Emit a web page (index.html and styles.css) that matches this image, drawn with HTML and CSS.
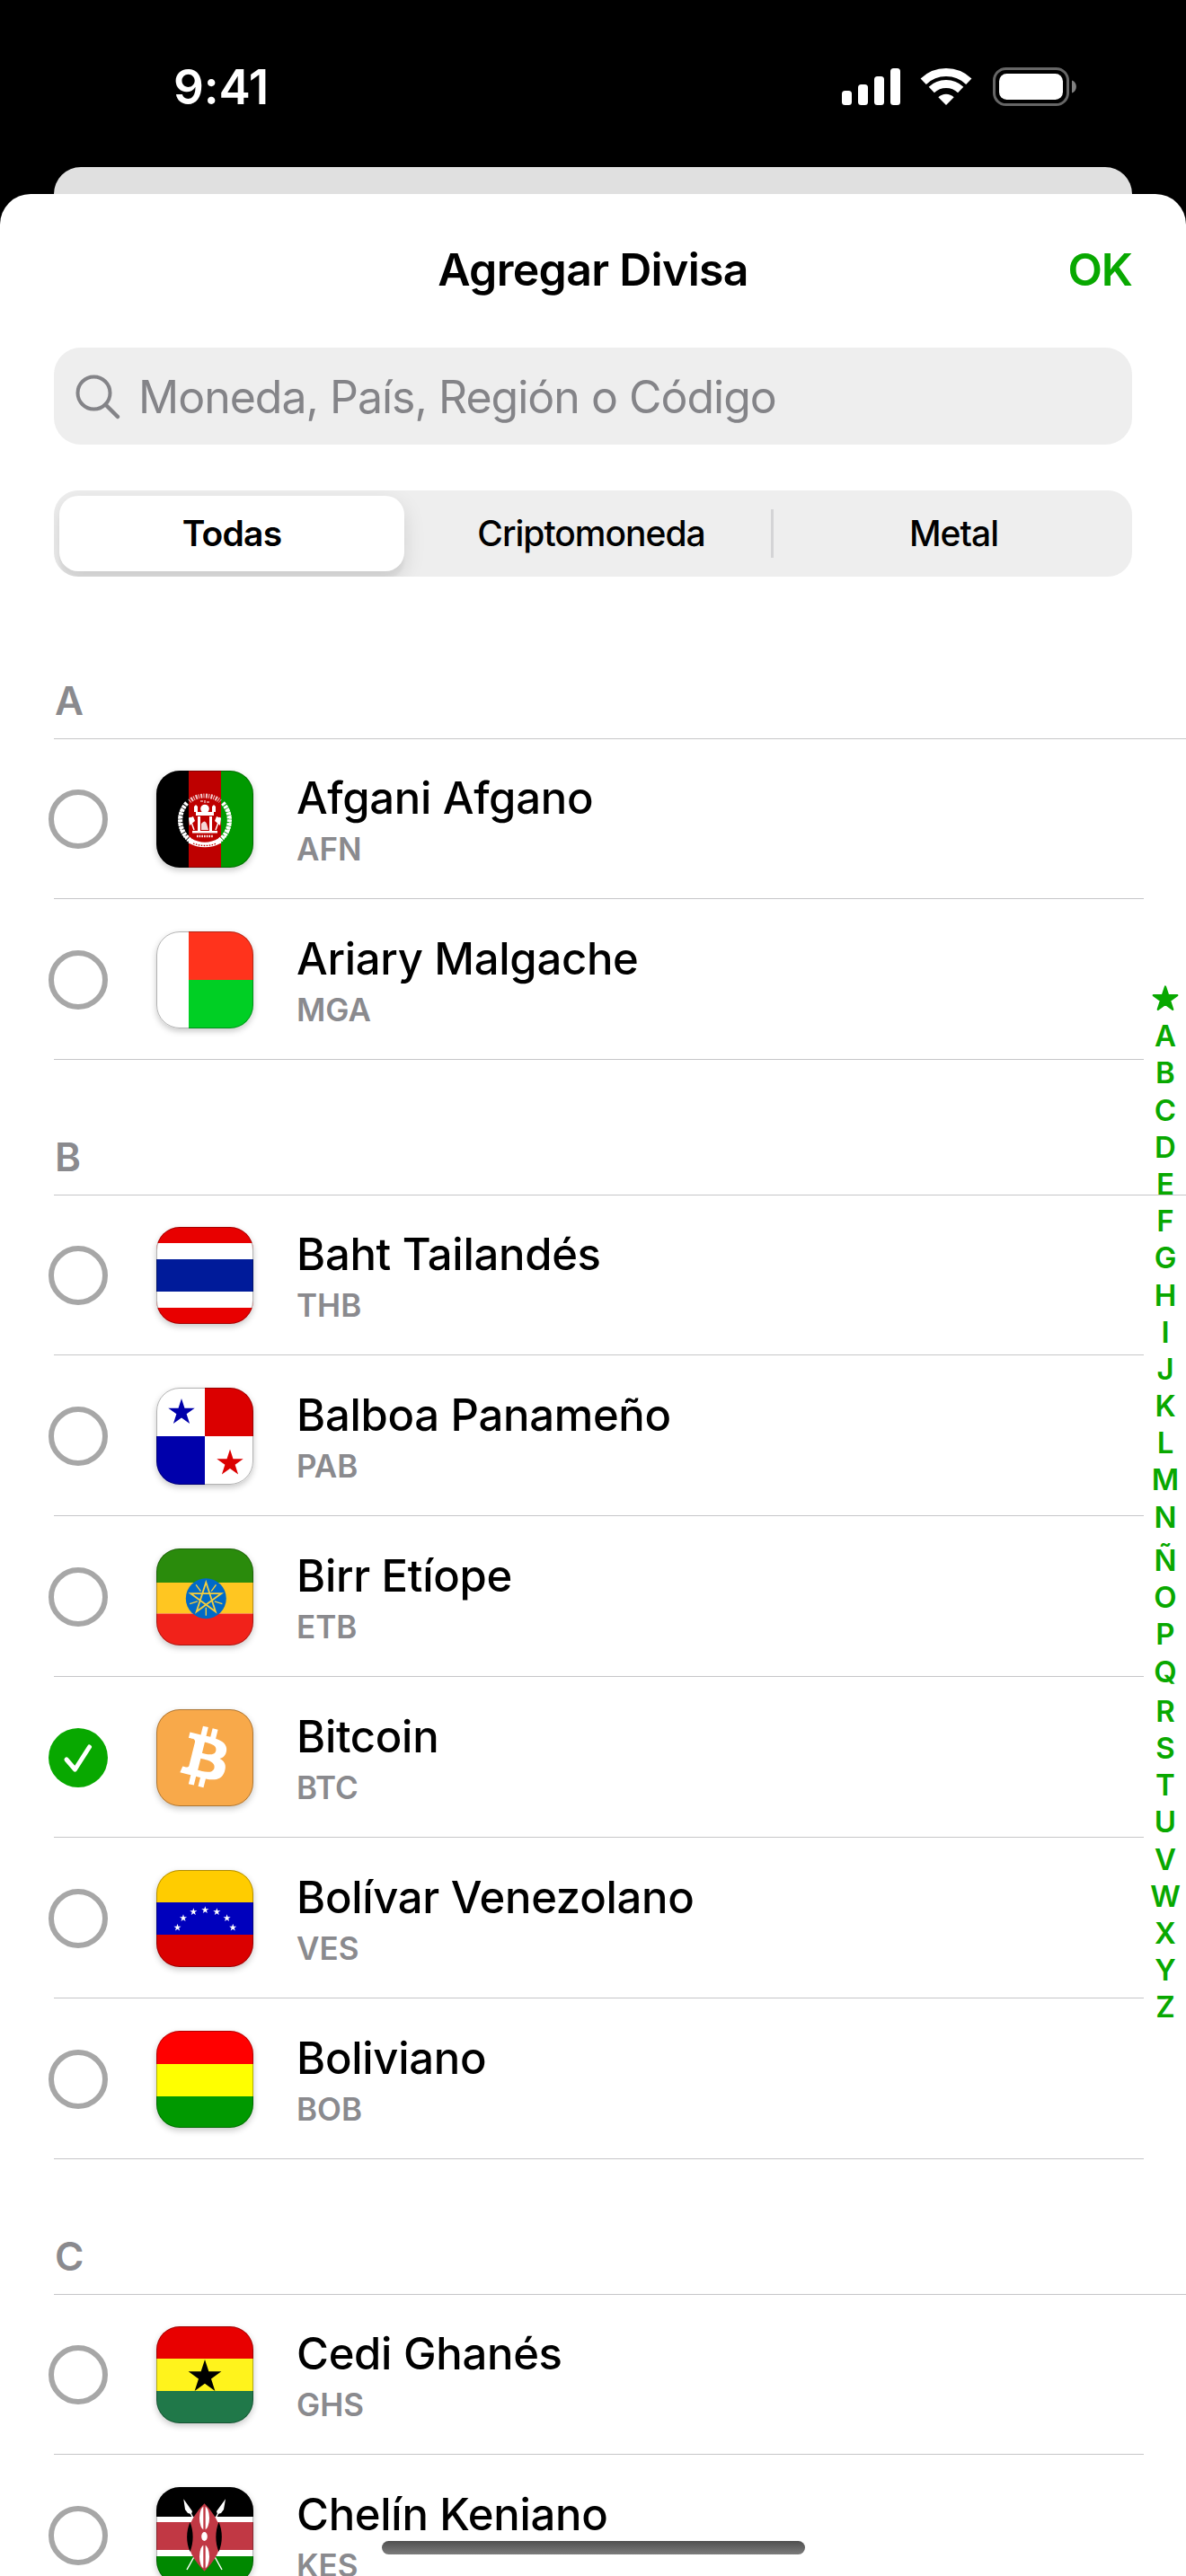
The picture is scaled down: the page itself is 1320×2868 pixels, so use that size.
FILE: index.html
```html
<!DOCTYPE html>
<html lang="es">

<head>
    <meta charset="UTF-8">
    <title>Agregar Divisa</title>
    <link rel="stylesheet" href="styles.css">
</head>

<body>

    <!-- Formas compartidas -->
    <svg class="defs" width="0" height="0">
        <defs>
            <polygon id="star" points="0,-1 .2245,-.309 .951,-.309 .363,.118 .588,.809 0,.382 -.588,.809 -.363,.118 -.951,-.309 -.2245,-.309" />
        </defs>
    </svg>

    <header class="status-bar">
        <span class="time">9:41</span>
        <div class="status-icons">
            <svg width="66" height="42" viewBox="0 0 66 42" fill="#fff">
                <rect x="0" y="25" width="11" height="16" rx="3.5" />
                <rect x="18" y="18" width="11" height="23" rx="3.5" />
                <rect x="36" y="9" width="11" height="32" rx="3.5" />
                <rect x="54" y="0" width="11" height="41" rx="3.5" />
            </svg>
            <svg class="wifi" width="58" height="43" viewBox="0 0 58 43" fill="none" stroke="#fff" stroke-width="9">
                <path d="M3.7 15.7a36.5 36.5 0 0 1 50.6 0" />
                <path d="M12.8 25a23.5 23.5 0 0 1 32.4 0" />
                <path d="M29 42L20.3 33.2a12.5 12.5 0 0 1 17.4 0z" fill="#fff" stroke="none" />
            </svg>
            <svg class="battery" width="93" height="43" viewBox="0 0 93 43">
                <rect x="1.5" y="1.5" width="82" height="40" rx="13" fill="none" stroke="#666" stroke-width="3" />
                <rect x="7" y="7" width="71" height="29" rx="8.5" fill="#fff" />
                <path d="M88 14.500c6.500 2 6.500 12 0 14z" fill="#808080" />
            </svg>
        </div>
    </header>

    <div class="back-card"></div>

    <main class="sheet">
        <div class="nav">
            <h1>Agregar Divisa</h1>
            <button class="ok">OK</button>
        </div>

        <div class="search">
            <svg width="50" height="50" viewBox="0 0 50 50" fill="none" stroke="#848488" stroke-width="4" stroke-linecap="round">
                <circle cx="20.500" cy="20.500" r="18" />
                <path d="M33.500 33.500L47 47" stroke-width="4.500" />
            </svg>
            <span>Moneda, País, Región o Código</span>
        </div>

        <div class="tabs">
            <div class="tab active">Todas</div>
            <div class="tab">Criptomoneda</div>
            <div class="tab last">Metal</div>
        </div>

        <!-- A -->
        <h2>A</h2>
        <ul>
            <li>
                <span class="check"></span>
                <div class="flag">
                    <svg viewBox="0 0 108 108">
                        <path fill="#000" d="M0 0h36v108H0z" />
                        <path fill="#be0000" d="M36 0h36v108H36z" />
                        <path fill="#090" d="M72 0h36v108H72z" />
                        <g fill="none" stroke="#fff">
                            <path d="M34 36C23 48 24 69 40 79" stroke-width="5" stroke-dasharray="3 1" />
                            <path d="M74 36C85 48 84 69 68 79" stroke-width="5" stroke-dasharray="3 1" />
                            <path d="M29 42C22 54 26 71 38 80M79 42C86 54 82 71 70 80" stroke-width="3" stroke-dasharray="1.500 1.200" />
                            <path d="M37 34C46 26 62 26 71 34" stroke-width="5" stroke-dasharray="1 1.400 2 1.200" opacity=".8" />
                            <path d="M37 78Q54 87 71 78" stroke-width="5.500" />
                            <path d="M41 81Q54 86 67 81" stroke="#be0000" stroke-width="1.300" stroke-dasharray="1.500 1.500" />
                            <path d="M49 34h3M54 33v3M56 35h3" stroke-width="1" />
                            <path d="M37 52l5 14M71 52l-5 14" stroke-width="1.500" />
                            <path d="M45 73h18" stroke-width="2.500" stroke-dasharray="1.500 1.200" />
                        </g>
                        <g fill="#fff">
                            <path d="M36 53l5-2 2 5-6 5zM72 53l-5-2-2 5 6 5z" />
                            <path d="M42 46v-6l2-2 2 2v6zM62 46v-6l2-2 2 2v6z" />
                            <circle cx="54" cy="42.500" r="4.800" />
                            <path d="M44 46h20v4H44zM46 51h3v16h-3zM59 51h3v16h-3zM40 67h28v2.500H40z" />
                            <path d="M50 66v-7q4-5 6 0l2 7z" opacity=".85" />
                        </g>
                    </svg>
                </div>
                <div class="info"><b>Afgani Afgano</b><small>AFN</small></div>
            </li>
            <li>
                <span class="check"></span>
                <div class="flag">
                    <svg viewBox="0 0 108 108">
                        <path fill="#fff" d="M0 0h36v108H0z" />
                        <path fill="#ff331c" d="M36 0h72v54H36z" />
                        <path fill="#00cf24" d="M36 54h72v54H36z" />
                    </svg>
                </div>
                <div class="info"><b>Ariary Malgache</b><small>MGA</small></div>
            </li>
        </ul>

        <!-- B -->
        <h2>B</h2>
        <ul>
            <li>
                <span class="check"></span>
                <div class="flag">
                    <svg viewBox="0 0 108 108">
                        <path fill="#e80000" d="M0 0h108v108H0z" />
                        <path fill="#fff" d="M0 18h108v72H0z" />
                        <path fill="#001b9a" d="M0 36h108v36H0z" />
                    </svg>
                </div>
                <div class="info"><b>Baht Tailandés</b><small>THB</small></div>
            </li>
            <li>
                <span class="check"></span>
                <div class="flag">
                    <svg viewBox="0 0 108 108">
                        <path fill="#fff" d="M0 0h108v108H0z" />
                        <path fill="#db0000" d="M54 0h54v54H54z" />
                        <path fill="#0000ab" d="M0 54h54v54H0z" />
                        <use href="#star" fill="#0000ab" transform="translate(28 27.500) scale(15.500)" />
                        <use href="#star" fill="#db0000" transform="translate(82 84) scale(15.500)" />
                    </svg>
                </div>
                <div class="info"><b>Balboa Panameño</b><small>PAB</small></div>
            </li>
            <li>
                <span class="check"></span>
                <div class="flag">
                    <svg viewBox="0 0 108 108">
                        <path fill="#2a8b0c" d="M0 0h108v38H0z" />
                        <path fill="#ffc621" d="M0 38h108v34.500H0z" />
                        <path fill="#f1221a" d="M0 72.500h108V108H0z" />
                        <circle cx="55.300" cy="55.700" r="22.500" fill="#006ac8" />
                        <g transform="translate(55.300 55.700)" fill="none" stroke="#f5ce3d" stroke-width="1.800">
                            <path d="M0-18L10.600 14.600-17.100-5.600H17.100L-10.600 14.600z" />
                            <path d="M0 10v9M9.500 3.100l8.600 2.800M-9.500 3.100l-8.600 2.800M5.900-8.100l5.300-7.300M-5.900-8.100l-5.300-7.300" stroke-width="1.400" />
                        </g>
                    </svg>
                </div>
                <div class="info"><b>Birr Etíope</b><small>ETB</small></div>
            </li>
            <li>
                <span class="check checked">
                    <svg width="66" height="66" viewBox="0 0 66 66" fill="none" stroke="#fff" stroke-width="5" stroke-linecap="round" stroke-linejoin="round">
                        <path d="M20 35L29.500 46 45.500 21" />
                    </svg>
                </span>
                <div class="flag">
                    <svg viewBox="0 0 108 108">
                        <path fill="#f8a94a" d="M0 0h108v108H0z" />
                        <path fill="#fff" fill-rule="evenodd" transform="translate(.1 -1) scale(4.570)" d="M17.060 10.360c.24-1.580-.97-2.430-2.610-3l.53-2.140-1.300-.33-.52 2.080c-.34-.09-.69-.17-1.040-.25l.52-2.100-1.300-.32-.53 2.140c-.28-.06-.56-.13-.83-.2l-1.800-.46-.34 1.390s.97.22.95.24c.53.13.62.48.61.76l-1.460 5.850c-.07.16-.23.4-.6.31.01.02-.95-.24-.95-.24l-.65 1.500 1.690.42c.32.08.62.16.93.24l-.54 2.160 1.300.32.53-2.140c.36.1.7.19 1.040.27l-.53 2.130 1.300.33.54-2.160c2.220.42 3.890.25 4.590-1.760.57-1.610-.03-2.550-1.190-3.150.85-.2 1.490-.76 1.660-1.920zm-2.970 4.170c-.4 1.620-3.130.74-4.010.52l.71-2.870c.89.22 3.720.66 3.300 2.350zm.4-4.190c-.37 1.470-2.640.72-3.370.54l.65-2.600c.74.18 3.110.53 2.720 2.060z" />
                    </svg>
                </div>
                <div class="info"><b>Bitcoin</b><small>BTC</small></div>
            </li>
            <li>
                <span class="check"></span>
                <div class="flag">
                    <svg viewBox="0 0 108 108">
                        <path fill="#fc0" d="M0 0h108v36H0z" />
                        <path fill="#0000bd" d="M0 36h108v36H0z" />
                        <path fill="#db0000" d="M0 72h108v36H0z" />
                        <g fill="#fff">
                            <use href="#star" transform="translate(23.500 64) scale(4.300)" />
                            <use href="#star" transform="translate(30 53.500) scale(4.300)" />
                            <use href="#star" transform="translate(41.300 46.500) scale(4.300)" />
                            <use href="#star" transform="translate(54.300 44.500) scale(4.300)" />
                            <use href="#star" transform="translate(67.300 46.500) scale(4.300)" />
                            <use href="#star" transform="translate(78.600 53.500) scale(4.300)" />
                            <use href="#star" transform="translate(85.200 64) scale(4.300)" />
                        </g>
                    </svg>
                </div>
                <div class="info"><b>Bolívar Venezolano</b><small>VES</small></div>
            </li>
            <li>
                <span class="check"></span>
                <div class="flag">
                    <svg viewBox="0 0 108 108">
                        <path fill="#f00" d="M0 0h108v37H0z" />
                        <path fill="#ff0" d="M0 37h108v36H0z" />
                        <path fill="#090" d="M0 73h108v35H0z" />
                    </svg>
                </div>
                <div class="info"><b>Boliviano</b><small>BOB</small></div>
            </li>
        </ul>

        <!-- C -->
        <h2>C</h2>
        <ul>
            <li>
                <span class="check"></span>
                <div class="flag">
                    <svg viewBox="0 0 108 108">
                        <path fill="#e80000" d="M0 0h108v36H0z" />
                        <path fill="#fff31c" d="M0 36h108v36H0z" />
                        <path fill="#207849" d="M0 72h108v36H0z" />
                        <use href="#star" fill="#000" transform="translate(54 56.300) scale(19.300)" />
                    </svg>
                </div>
                <div class="info"><b>Cedi Ghanés</b><small>GHS</small></div>
            </li>
            <li>
                <span class="check"></span>
                <div class="flag">
                    <svg viewBox="0 0 108 108">
                        <path fill="#fff" d="M0 0h108v108H0z" />
                        <path fill="#000" d="M0 0h108v33H0z" />
                        <path fill="#c13844" d="M0 39h108v31H0z" />
                        <path fill="#080" d="M0 77h108v31H0z" />
                        <path d="M38 29L73 92M69 29L34 92" stroke="#fff" stroke-width="1.500" />
                        <path fill="#fff" d="M30.300 13.300L40 27l-1 3-4-1-3-4zM77 13.300L67 27l1 3 4-1 3-4z" />
                        <path fill="#c13844" d="M53.500 18.300Q91 56 53.500 93.700 16 56 53.500 18.300z" />
                        <path d="M37.500 39c-4.500 10-4.500 23 0 33 4.200-10 4.200-23 0-33zM69.500 39c4.500 10 4.500 23 0 33-4.200-10-4.200-23 0-33z" />
                        <g fill="#fff">
                            <ellipse cx="53.500" cy="34.500" rx="5.500" ry="13" />
                            <ellipse cx="53.500" cy="55" rx="3.300" ry="5" />
                            <ellipse cx="53.500" cy="77.500" rx="5.500" ry="13" />
                        </g>
                        <path d="M53.500 21v27M53.500 64v27" stroke="#c13844" stroke-width="2.400" />
                    </svg>
                </div>
                <div class="info"><b>Chelín Keniano</b><small>KES</small></div>
            </li>
        </ul>
    </main>

    <!-- Índice alfabético -->
    <nav class="index">
        <svg width="30" height="27" viewBox="-15 -15 30 27">
            <use href="#star" fill="#08a800" stroke="#08a800" stroke-width=".16" stroke-linejoin="round" transform="translate(0 -.5) scale(14)" />
        </svg>
        <a>A</a><a>B</a><a>C</a><a>D</a><a>E</a><a>F</a><a>G</a><a>H</a><a>I</a>
        <a>J</a><a>K</a><a>L</a><a>M</a><a>N</a><a class="tilde">Ñ</a><a>O</a><a>P</a><a class="tail">Q</a>
        <a>R</a><a>S</a><a>T</a><a>U</a><a>V</a><a>W</a><a>X</a><a>Y</a><a>Z</a>
    </nav>

    <div class="home-indicator"></div>

</body>

</html>
```
FILE: styles.css
```css
* {
    box-sizing: border-box;
    margin: 0;
    padding: 0;
}

body {
    position: relative;
    width: 1320px;
    height: 2868px;
    overflow: hidden;
    background: #000;
    color: #000;
    font-family: Inter, "Liberation Sans", sans-serif;
}

svg {
    display: block;
    overflow: visible;
}

.defs {
    position: absolute;
}

.status-bar {
    display: flex;
    justify-content: space-between;
    height: 186px;
    padding: 75px 122px 0 193px;
}

.time {
    height: 45px;
    line-height: 45px;
    font-size: 53px;
    font-weight: 600;
    color: #fff;
    letter-spacing: -.2px;
}

.status-icons {
    display: flex;
}

.status-icons svg:first-child {
    margin-top: 1px;
}

.wifi {
    margin: 0 23px 0 21px;
}

.back-card {
    height: 30px;
    margin: 0 60px;
    background: #e0e0e0;
    border-radius: 30px 30px 0 0;
}

.sheet {
    height: 2652px;
    background: #fff;
    border-radius: 34px 34px 0 0;
    overflow: hidden;
}

.nav {
    display: grid;
    grid-template-columns: 1fr auto 1fr;
    align-items: center;
    height: 168px;
    padding: 0 60px;
}

h1 {
    grid-column: 2;
    font-size: 50px;
    font-weight: 600;
    letter-spacing: -.7px;
}

.ok {
    justify-self: end;
    border: 0;
    background: none;
    font: 600 50px Inter, sans-serif;
    color: #08a800;
    letter-spacing: -1px;
}

.search {
    display: flex;
    align-items: center;
    gap: 20px;
    height: 108px;
    margin: 3px 60px 51px;
    padding: 2px 24px 0;
    border-radius: 30px;
    background: #eee;
    color: #848488;
    font-size: 50px;
    letter-spacing: -1px;
}

.tabs {
    display: grid;
    grid-template-columns: 384px 408px 1fr;
    align-items: center;
    height: 96px;
    margin: 0 60px 30px;
    padding: 6px;
    border-radius: 27px;
    background: #eee;
    overflow: hidden;
}

.tab {
    height: 54px;
    padding-left: 8px;
    line-height: 54px;
    text-align: center;
    font-size: 39px;
    font-weight: 500;
    letter-spacing: -1px;
}

.tab.active {
    height: 84px;
    padding-left: 0;
    line-height: 84px;
    border-radius: 21px;
    background: #fff;
    box-shadow: 0 9px 24px rgba(0, 0, 0, .12), 0 9px 3px rgba(0, 0, 0, .04);
    font-weight: 600;
    letter-spacing: -.8px;
}

.tab.last {
    border-left: 3px solid #d4d4d6;
}

/* La linea del encabezado se superpone con la primera fila */
h2 {
    height: 151px;
    margin: 0 0 -1px 60px;
    padding: 78px 0 0 1px;
    border-bottom: 1px solid #c6c6c8;
    line-height: 60px;
    font-size: 44px;
    font-weight: 600;
    color: #8a8a8e;
}

ul {
    margin: 0 47px 0 60px;
    list-style: none;
}

li {
    display: flex;
    height: 179px;
    padding-top: 36px;
    border-bottom: 1px solid #c6c6c8;
}

.check {
    width: 66px;
    height: 66px;
    margin: 21px 54px 0 -6px;
    border: 6px solid #a7a7a7;
    border-radius: 50%;
}

.check.checked {
    border: 0;
    background: #08a800;
}

.flag {
    position: relative;
    width: 108px;
    height: 108px;
    margin-right: 48px;
    border-radius: 26px;
    box-shadow: 0 3px 7px rgba(0, 0, 0, .22);
}

.flag svg {
    width: 108px;
    height: 108px;
    border-radius: 26px;
    overflow: hidden;
}

/* Borde fino sobre la bandera */
.flag::after {
    content: "";
    position: absolute;
    inset: 0;
    border: 1px solid rgba(0, 0, 0, .3);
    border-radius: 26px;
}

.info {
    display: flex;
    flex-direction: column;
}

.info b {
    line-height: 62px;
    font-size: 49px;
    font-weight: 500;
    letter-spacing: -.3px;
}

.info small {
    line-height: 50px;
    font-size: 35px;
    font-weight: 600;
    color: #8a8a8e;
}

.index {
    position: absolute;
    top: 1092px;
    right: 0;
    display: flex;
    flex-direction: column;
    align-items: center;
    width: 46px;
    font-size: 33px;
    font-weight: 600;
    line-height: 41.2px;
    color: #08a800;
}

.index svg {
    margin: 6px 0 8.2px;
}

.index a {
    height: 41.2px;
}

.index .tilde {
    height: 48.2px;
    padding-top: 7px;
}

.index .tail {
    height: 44.5px;
    padding-top: 1px;
}

.home-indicator {
    position: absolute;
    left: 425px;
    bottom: 24px;
    width: 471px;
    height: 15px;
    border-radius: 8px;
    background: linear-gradient(#4f4f4f, #7c7c7c);
}
```
